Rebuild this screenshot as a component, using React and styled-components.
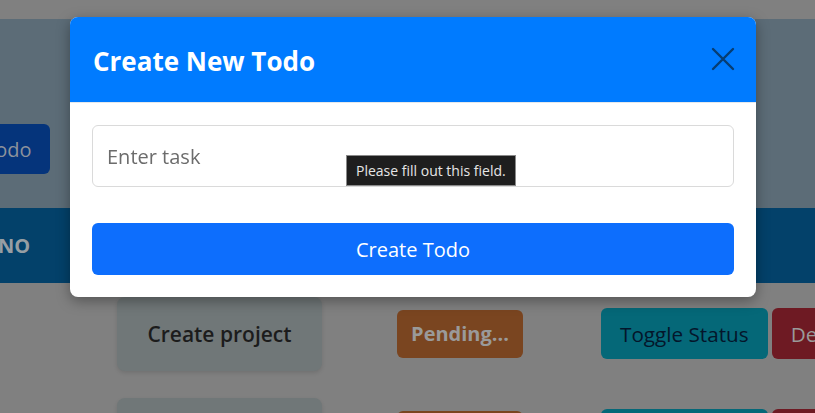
import React from 'react';
import styled, { createGlobalStyle } from 'styled-components';

const GlobalStyle = createGlobalStyle`
html, body {
  margin: 0;
  padding: 0;
  overflow: hidden;
}
body {
  font-family: "Open Sans", "Noto Sans", Arial, sans-serif;
  background: #808080;
}
`;

const rows = [
  { id: 1, task: 'Create project' },
  { id: 2, task: 'Write docs' },
];

const App = () => {
  return (
    <>
      <GlobalStyle />
      <Page>
        <TopBar />
        <Hero>
          <AddButton>Add Todo</AddButton>
        </Hero>
        <Table>
          <HeadRow>
            <HeadCell>NO</HeadCell>
          </HeadRow>
          {rows.map((row) => (
            <Row key={row.id}>
              <span />
              <TaskCard>{row.task}</TaskCard>
              <Status>Pending...</Status>
              <Actions>
                <ActionButton tone="toggle">Toggle Status</ActionButton>
                <ActionButton tone="delete">Delete</ActionButton>
              </Actions>
            </Row>
          ))}
        </Table>
      </Page>

      <Backdrop>
        <Modal>
          <ModalHeader>
            <Title>Create New Todo</Title>
            <CloseButton aria-label="Close">
              <svg width="24" height="24" viewBox="0 0 24 24">
                <path d="M2 2 L22 22 M22 2 L2 22" stroke="#063d73" strokeWidth="2.4" strokeLinecap="round" />
              </svg>
            </CloseButton>
          </ModalHeader>
          <ModalBody>
            <Field>
              <Input placeholder="Enter task" />
              <Tooltip>Please fill out this field.</Tooltip>
            </Field>
            <SubmitButton>Create Todo</SubmitButton>
          </ModalBody>
        </Modal>
      </Backdrop>
    </>
  );
};

const Page = styled.div`
width: 100%;
height: 413px;
overflow: hidden;
background: #808080;
`

const TopBar = styled.div`
height: 19px;
background: #808080;
`

const Hero = styled.div`
height: 189px;
background: #5c6c77;
display: flex;
align-items: flex-start;
padding-top: 105px;
box-sizing: border-box;
`

const AddButton = styled.div`
margin-left: -76px;
height: 50px;
padding: 0 18px;
display: flex;
align-items: center;
background: #05347b;
color: #8c929c;
font-size: 20px;
border-radius: 6px;
`

const Table = styled.div`
display: flex;
flex-direction: column;
`

const HeadRow = styled.div`
height: 75px;
background: #03416a;
display: flex;
align-items: center;
`

const HeadCell = styled.div`
margin-left: -2px;
color: #979ea3;
font-weight: 700;
font-size: 20px;
`

const Row = styled.div`
display: grid;
grid-template-columns: 117px 205px 75px 126px 78px auto;
align-items: center;
height: 101px;
box-sizing: border-box;
`

const TaskCard = styled.div`
height: 74px;
display: flex;
align-items: center;
justify-content: center;
background: #707778;
border-radius: 8px;
box-shadow: 0 2px 4px rgba(0, 0, 0, 0.12);
color: #1c1c1c;
font-size: 21px;
font-weight: 600;
`

const Status = styled.div`
grid-column: 4;
height: 48px;
display: flex;
align-items: center;
justify-content: center;
background: #7a4520;
border-radius: 6px;
color: #9a9a9a;
font-weight: 700;
font-size: 20px;
`

const Actions = styled.div`
grid-column: 6;
display: flex;
gap: 4px;
`

const ActionButton = styled.div`
height: 51px;
padding: 0 19px;
display: flex;
align-items: center;
border-radius: 6px;
font-size: 20.7px;
white-space: nowrap;
background: ${(p) => (p.tone === 'delete' ? '#6e1a23' : '#056878')};
color: ${(p) => (p.tone === 'delete' ? '#9a9a9a' : '#04162b')};
`

const Backdrop = styled.div`
position: fixed;
inset: 0;
display: flex;
align-items: flex-start;
padding: 17px 0 0 70px;
`

const Modal = styled.div`
width: 686px;
background: #fff;
border-radius: 8px;
box-shadow: 0 4px 14px rgba(0, 0, 0, 0.35);
`

const ModalHeader = styled.div`
height: 86px;
display: flex;
align-items: center;
justify-content: space-between;
padding: 2px 21px 0 23px;
background: #007bff;
border-radius: 8px 8px 0 0;
border-bottom: 1px solid #e4e8ec;
box-sizing: border-box;
`

const Title = styled.h2`
margin: 0;
color: #fff;
font-size: 26px;
font-weight: 700;
`

const CloseButton = styled.button`
border: 0;
padding: 0;
margin-top: -4px;
background: transparent;
display: flex;
cursor: pointer;
`

const ModalBody = styled.div`
padding: 22px 22px 22px 22px;
display: flex;
flex-direction: column;
gap: 36px;
`

const Field = styled.div`
position: relative;
`

const Input = styled.input`
width: 100%;
height: 62px;
box-sizing: border-box;
padding: 0 14px;
border: 1px solid #dadada;
border-radius: 6px;
font-family: inherit;
font-size: 20px;
color: #333;
outline: none;
&::placeholder {
  color: #6c6c6c;
}
`

const Tooltip = styled.div`
position: absolute;
left: 254px;
top: 30px;
height: 31px;
padding: 0 9px;
display: flex;
align-items: center;
background: #1e1e1e;
border: 1px solid #8a8a8a;
box-sizing: border-box;
color: #e6e6e6;
font-size: 14px;
white-space: nowrap;
`

const SubmitButton = styled.button`
height: 52px;
border: 0;
border-radius: 6px;
background: #0d6efd;
color: #fff;
font-family: inherit;
font-size: 20px;
cursor: pointer;
`

export default App;
